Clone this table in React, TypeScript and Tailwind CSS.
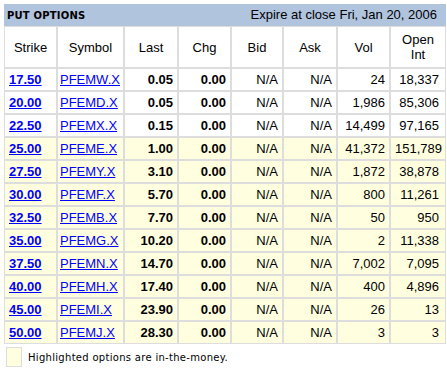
import React from "react";

type Row = [string, string, string, string, string, string, string, string, boolean];

const rows: Row[] = [
  ["17.50", "PFEMW.X", "0.05", "0.00", "N/A", "N/A", "24", "18,337", false],
  ["20.00", "PFEMD.X", "0.05", "0.00", "N/A", "N/A", "1,986", "85,306", false],
  ["22.50", "PFEMX.X", "0.15", "0.00", "N/A", "N/A", "14,499", "97,165", false],
  ["25.00", "PFEME.X", "1.00", "0.00", "N/A", "N/A", "41,372", "151,789", true],
  ["27.50", "PFEMY.X", "3.10", "0.00", "N/A", "N/A", "1,872", "38,878", true],
  ["30.00", "PFEMF.X", "5.70", "0.00", "N/A", "N/A", "800", "11,261", true],
  ["32.50", "PFEMB.X", "7.70", "0.00", "N/A", "N/A", "50", "950", true],
  ["35.00", "PFEMG.X", "10.20", "0.00", "N/A", "N/A", "2", "11,338", true],
  ["37.50", "PFEMN.X", "14.70", "0.00", "N/A", "N/A", "7,002", "7,095", true],
  ["40.00", "PFEMH.X", "17.40", "0.00", "N/A", "N/A", "400", "4,896", true],
  ["45.00", "PFEMI.X", "23.90", "0.00", "N/A", "N/A", "26", "13", true],
  ["50.00", "PFEMJ.X", "28.30", "0.00", "N/A", "N/A", "3", "3", true],
];

const th = "border border-[#dddddd] font-normal text-center align-middle leading-[15px]";
const td = "border border-[#dddddd] h-[23px] px-[4px] align-middle leading-[15px]";

export default function App() {
  return (
    <div className="bg-white w-[447px] h-[369px] pt-[4px] pl-[4px] text-black text-[13px] font-['Liberation_Sans',Arial,sans-serif]">
      <div className="w-[442px] h-[22px] bg-[#b0c4de] flex items-center justify-between pl-[3px] pr-[9px]">
        <span className="text-[10px] font-bold font-['DejaVu_Sans',Verdana,sans-serif] tracking-[0.2px]">PUT OPTIONS</span>
        <span className="text-[13px]">Expire at close Fri, Jan 20, 2006</span>
      </div>
      <table className="w-[442px] border-separate border-spacing-0 table-fixed">
        <colgroup>
          <col className="w-[53px]" />
          <col className="w-[67px]" />
          <col className="w-[54px]" />
          <col className="w-[53px]" />
          <col className="w-[52px]" />
          <col className="w-[54px]" />
          <col className="w-[53px]" />
          <col className="w-[56px]" />
        </colgroup>
        <thead>
          <tr className="h-[42px]">
            <th className={th}>Strike</th>
            <th className={th}>Symbol</th>
            <th className={th}>Last</th>
            <th className={th}>Chg</th>
            <th className={th}>Bid</th>
            <th className={th}>Ask</th>
            <th className={th}>Vol</th>
            <th className={th}>
              Open
              <br />
              Int
            </th>
          </tr>
        </thead>
        <tbody>
          {rows.map((r) => (
            <tr key={r[0]} className={r[8] ? "bg-[#ffffe0]" : "bg-white"}>
              <td className={`${td} text-left`}>
                <a href="#" className="text-[#0000ff] underline font-bold">{r[0]}</a>
              </td>
              <td className={`${td} text-left pl-[2px]`}>
                <a href="#" className="text-[#0000ff] underline">{r[1]}</a>
              </td>
              <td className={`${td} text-right font-bold`}>{r[2]}</td>
              <td className={`${td} text-right font-bold`}>{r[3]}</td>
              <td className={`${td} text-right`}>{r[4]}</td>
              <td className={`${td} text-right`}>{r[5]}</td>
              <td className={`${td} text-right`}>{r[6]}</td>
              <td className={`${td} text-right pr-[6px]`}>{r[7]}</td>
            </tr>
          ))}
        </tbody>
      </table>
      <div className="flex items-center mt-[3px] pl-[2px]">
        <div className="w-[16px] h-[20px] bg-[#ffffe0] border border-[#dddddd]" />
        <span className="ml-[6px] text-[10px] font-['DejaVu_Sans',Verdana,sans-serif] tracking-[0.3px]">
          Highlighted options are in-the-money.
        </span>
      </div>
    </div>
  );
}
